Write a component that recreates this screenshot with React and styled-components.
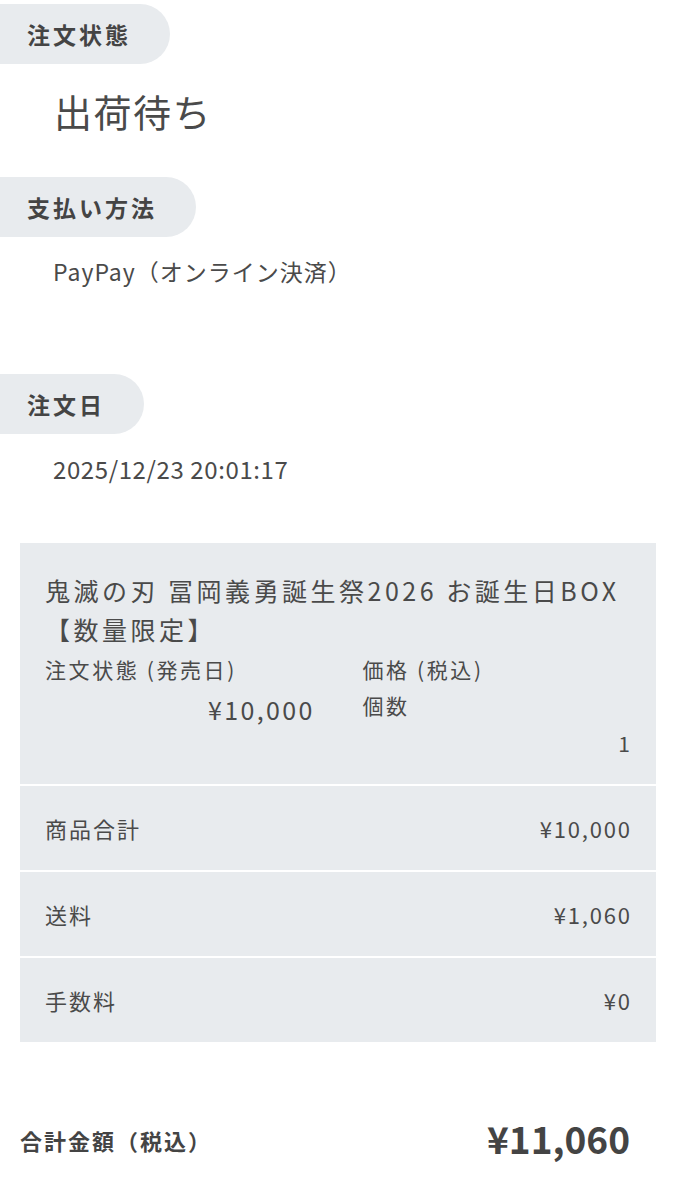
import React from "react";
import styled, { createGlobalStyle } from "styled-components";

const Global = createGlobalStyle`
  html, body { margin: 0; padding: 0; background: #ffffff; }
  body {
    font-family: "Noto Sans CJK JP", "Noto Sans", sans-serif;
    color: #4a4a4a;
  }
`;

const Page = styled.div`
  width: 676px;
  padding-top: 4px;
  padding-bottom: 40px;
  display: flex;
  flex-direction: column;
`;

const Section = styled.section`
  display: flex;
  flex-direction: column;
  align-items: flex-start;
  margin-bottom: ${(p) => p.$after}px;
`;

const Pill = styled.div`
  height: 60px;
  display: flex;
  align-items: center;
  padding: 0 39px 0 27px;
  background: #e8ebee;
  border-radius: 0 30px 30px 0;
  font-size: 23px;
  font-weight: 700;
  letter-spacing: 3px;
  color: #444;
`;

const Value = styled.div`
  margin-top: ${(p) => p.$top}px;
  padding-left: ${(p) => p.$left || 53}px;
  font-size: ${(p) => p.$size}px;
  line-height: ${(p) => p.$lh}px;
  letter-spacing: ${(p) => p.$ls || 0}px;
  color: #4a4a4a;
`;

const Card = styled.div`
  margin: 0 20px;
  display: flex;
  flex-direction: column;
  gap: 2px;
`;

const ItemBlock = styled.div`
  background: #e8ebee;
  padding: 28px 26px 19px 25px;
`;

const Title = styled.div`
  font-size: 25px;
  line-height: 39px;
  letter-spacing: 3.5px;
  color: #4a4a4a;
`;

const Detail = styled.div`
  display: grid;
  grid-template-columns: 1fr 1fr;
  column-gap: 50px;
`;

const Col = styled.div`
  display: flex;
  flex-direction: column;
`;

const Label = styled.div`
  font-size: 21px;
  line-height: ${(p) => p.$lh || 32}px;
  letter-spacing: 2.6px;
  color: #4a4a4a;
`;

const Num = styled.div`
  font-size: ${(p) => p.$size}px;
  line-height: ${(p) => p.$lh}px;
  letter-spacing: ${(p) => p.$ls || 0}px;
  margin-right: -${(p) => p.$ls || 0}px;
  text-align: right;
  color: #4a4a4a;
`;

const Row = styled.div`
  background: #e8ebee;
  height: 84px;
  display: flex;
  align-items: center;
  justify-content: space-between;
  padding: 0 26px 0 25px;
  font-size: 22px;
  color: #4a4a4a;
`;

const RowLabel = styled.span`
  letter-spacing: 2px;
`;

const RowValue = styled.span`
  letter-spacing: 1.8px;
  margin-right: -1.8px;
`;

const TotalRow = styled.div`
  margin: 71px 46px 0 20px;
  display: flex;
  align-items: center;
  justify-content: space-between;
  height: 50px;
`;

const TotalLabel = styled.div`
  font-size: 22px;
  font-weight: 700;
  letter-spacing: 2px;
  color: #444;
  padding-top: 4px;
`;

const TotalValue = styled.div`
  font-size: 37px;
  font-weight: 700;
  color: #444;
`;

export default function App() {
  return (
    <>
      <Global />
      <Page>
        <Section $after={38}>
          <Pill>注文状態</Pill>
          <Value $top={19} $size={38} $lh={56} $left={54} $ls={1.5}>出荷待ち</Value>
        </Section>
        <Section $after={87}>
          <Pill>支払い方法</Pill>
          <Value $top={18} $size={23} $lh={32} $ls={1}>PayPay（オンライン決済）</Value>
        </Section>
        <Section $after={58}>
          <Pill>注文日</Pill>
          <Value $top={19} $size={24} $lh={32} $ls={0.6}>2025/12/23 20:01:17</Value>
        </Section>
        <Card>
          <ItemBlock>
            <Title>
              鬼滅の刃 冨岡義勇誕生祭2026 お誕生日BOX
              <br />
              【数量限定】
            </Title>
            <Detail>
              <Col>
                <Label $lh={40}>注文状態 (発売日)</Label>
                <Num $size={25} $lh={40} $ls={2.4}>¥10,000</Num>
              </Col>
              <Col>
                <Label $lh={40}>価格 (税込)</Label>
                <Label>個数</Label>
                <Num $size={21} $lh={44}>1</Num>
              </Col>
            </Detail>
          </ItemBlock>
          <Row>
            <RowLabel>商品合計</RowLabel>
            <RowValue>¥10,000</RowValue>
          </Row>
          <Row>
            <RowLabel>送料</RowLabel>
            <RowValue>¥1,060</RowValue>
          </Row>
          <Row>
            <RowLabel>手数料</RowLabel>
            <RowValue>¥0</RowValue>
          </Row>
        </Card>
        <TotalRow>
          <TotalLabel>合計金額（税込）</TotalLabel>
          <TotalValue>¥11,060</TotalValue>
        </TotalRow>
      </Page>
    </>
  );
}
